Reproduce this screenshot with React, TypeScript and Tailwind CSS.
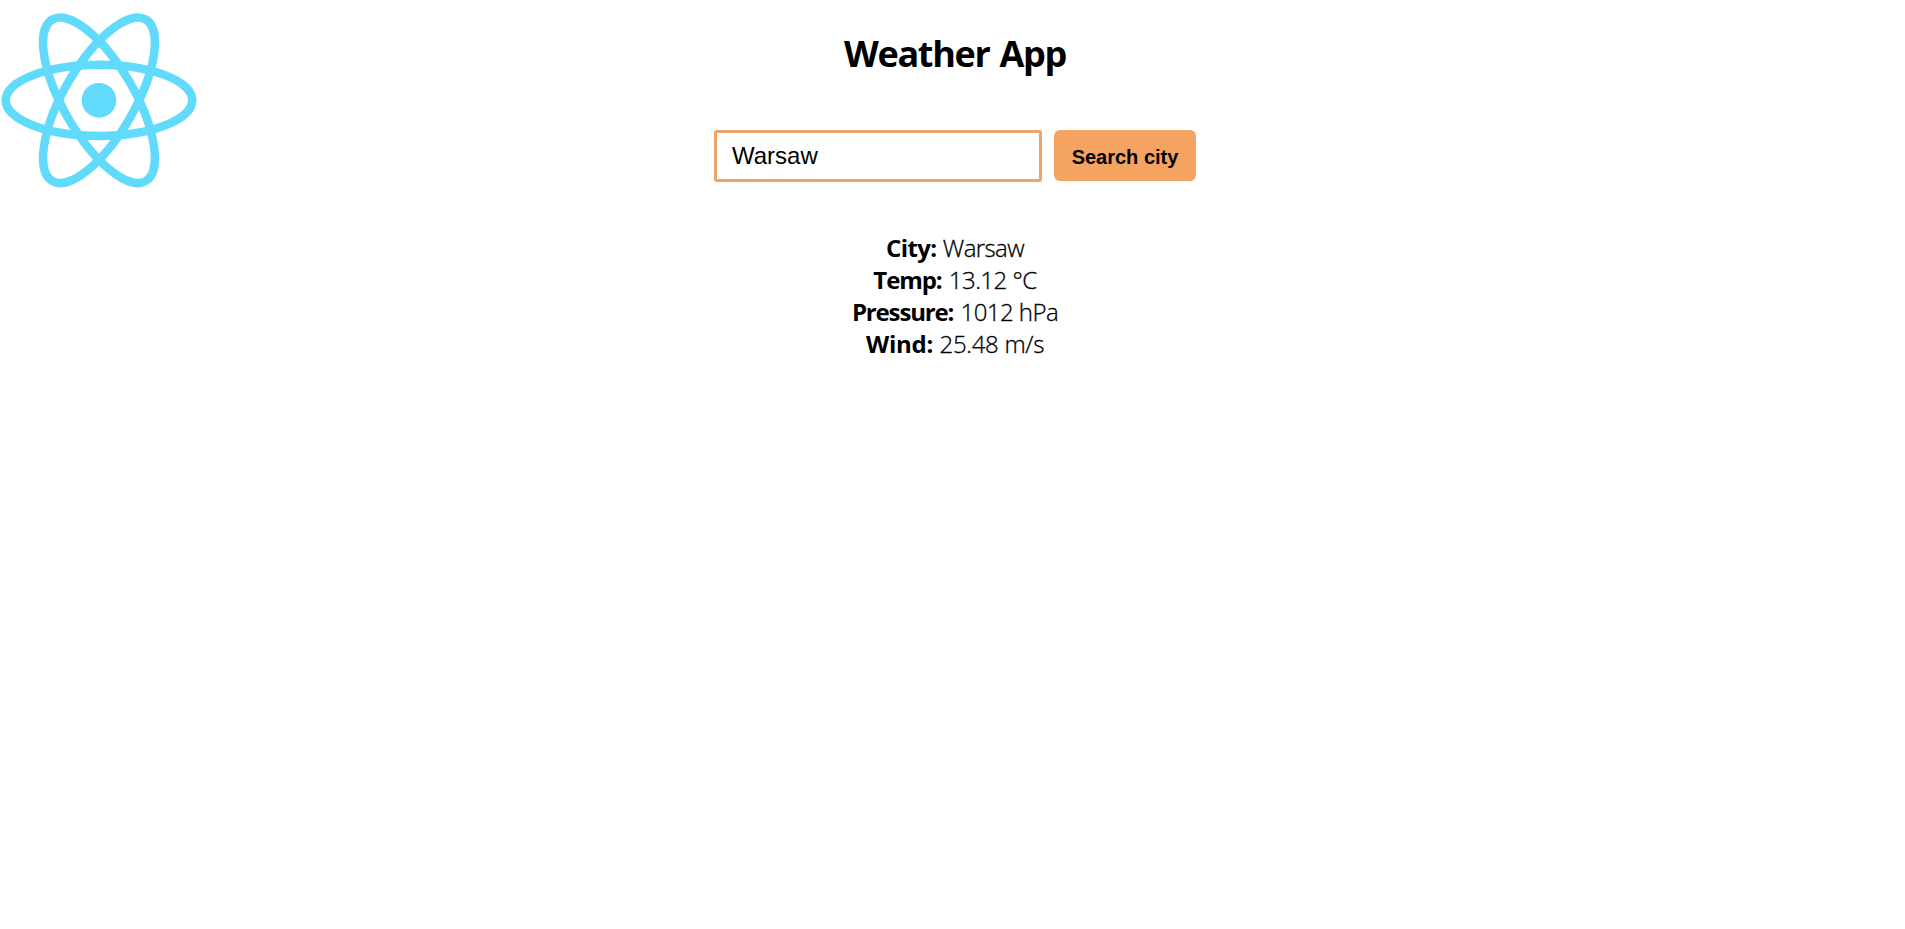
import { useState } from "react";

const readings = [
  { label: "City:", value: "Warsaw", labelStyle: "tracking-[-0.6px]", valueStyle: "tracking-[-0.6px]" },
  { label: "Temp:", value: "13.12 °C", labelStyle: "tracking-[-1.1px]", valueStyle: "tracking-[-0.5px] ml-[1px]" },
  { label: "Pressure:", value: "1012 hPa", labelStyle: "tracking-[-1.15px]", valueStyle: "tracking-[-0.55px] ml-[1px]" },
  { label: "Wind:", value: "25.48 m/s", labelStyle: "tracking-[-0.2px]", valueStyle: "tracking-[-0.3px]" },
];

function ReactLogo() {
  return (
    <svg
      className="absolute left-[1px] top-[10px] h-[180px] w-[196px]"
      viewBox="-11.56 -10.65 23.12 21.23"
      aria-hidden="true"
    >
      <circle r="2.05" fill="#61dafb" />
      <g fill="none" stroke="#61dafb">
        <ellipse rx="11" ry="4.2" />
        <ellipse rx="11" ry="4.2" transform="rotate(60)" />
        <ellipse rx="11" ry="4.2" transform="rotate(120)" />
      </g>
    </svg>
  );
}

export default function App() {
  const [city, setCity] = useState("Warsaw");
  return (
    <div className="relative flex min-h-screen flex-col items-center bg-white pl-[5px] font-['Open_Sans','Noto_Sans',sans-serif] text-black">
      <ReactLogo />
      <h1 className="mt-[30px] text-[36px] leading-[48px] font-bold tracking-[-1.3px] [word-spacing:2px]">Weather App</h1>
      <form className="mt-[52px] flex items-start gap-3" onSubmit={(e) => e.preventDefault()}>
        <input
          className="h-[52px] w-[328px] rounded-[3px] border-3 border-[#eaa36b] px-[15px] font-['Liberation_Sans',Arial,sans-serif] text-2xl outline-none"
          value={city}
          onChange={(e) => setCity(e.target.value)}
        />
        <button className="h-[51px] w-[142px] rounded-[6px] bg-[#f4a460] pt-[2px] font-['Liberation_Sans',Arial,sans-serif] text-xl font-bold">
          Search city
        </button>
      </form>
      <div className="mt-[50px] text-center text-2xl leading-8">
        {readings.map((r) => (
          <p key={r.label}>
            <strong className={r.labelStyle}>{r.label}</strong>{" "}
            <span className={`font-light [-webkit-text-stroke:0.3px_black] ${r.valueStyle}`}>{r.value}</span>
          </p>
        ))}
      </div>
    </div>
  );
}
